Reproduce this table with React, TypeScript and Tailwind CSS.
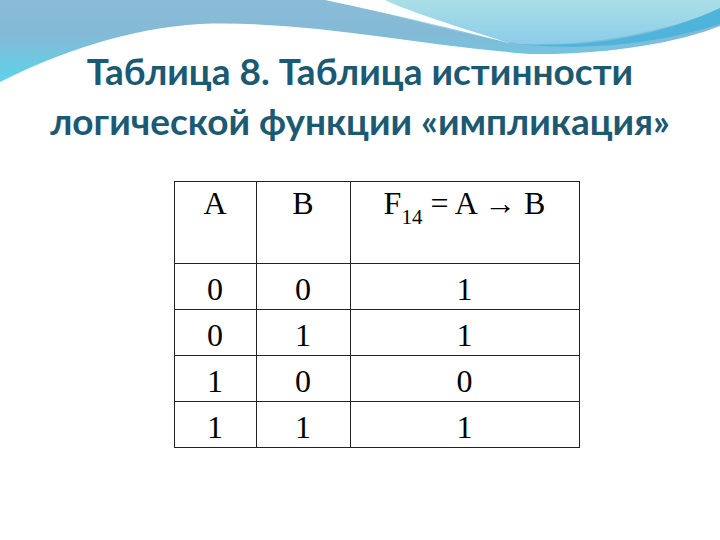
import React from "react";

const rows: [number, number, number][] = [
  [0, 0, 1],
  [0, 1, 1],
  [1, 0, 0],
  [1, 1, 1],
];

// decorative wave band across the top of the slide
const Wave = () => (
  <svg
    className="absolute left-0 top-0"
    width="720"
    height="110"
    viewBox="0 0 720 110"
    aria-hidden="true"
  >
    <defs>
      <linearGradient id="base" x1="0" y1="0" x2="0" y2="1">
        <stop offset="0" stopColor="#8abcd6" />
        <stop offset="0.3" stopColor="#84bad6" />
        <stop offset="0.75" stopColor="#5dd3ea" />
      </linearGradient>
      <linearGradient id="light" x1="0" y1="0" x2="0" y2="1">
        <stop offset="0" stopColor="#a9e0e6" />
        <stop offset="1" stopColor="#8ccbea" />
      </linearGradient>
    </defs>
    <rect x="0" y="0" width="720" height="110" fill="url(#base)" />
    <path d="M330,0 L720,0 L720,10 C650,36 585,46 520,44 C450,32 385,12 330,0 Z" fill="url(#light)" />
    <path d="M720,8 C655,38 585,48 518,44 C590,52 665,42 720,24 Z" fill="#4fb4da" />
    <path d="M325,0 C400,16 460,30 512,44 C455,26 405,10 385,0 Z" fill="#ffffff" />
    <path
      d="M0,82 C60,52 130,28 200,24 C310,20 420,46 530,54 C610,55 680,42 720,26 L720,110 L0,110 Z"
      fill="#ffffff"
    />
  </svg>
);

const cell = "border border-[#222] p-0 text-center";

export default function App() {
  return (
    <div className="relative w-[720px] h-[540px] overflow-hidden bg-white">
      <Wave />
      <div className="relative flex flex-col items-center">
        <h1
          className="mt-[46px] text-center text-[37px] leading-[50px] font-bold text-[#1b5a72]"
          style={{ fontFamily: "Lato, 'Open Sans', sans-serif" }}
        >
          Таблица 8. Таблица истинности
          <br />
          логической функции «импликация»
        </h1>

        <table
          className="mt-[35px] ml-[33px] border-collapse text-[32px] text-black"
          style={{ fontFamily: "'Liberation Serif', 'Times New Roman', serif" }}
        >
          <thead>
            <tr className="h-[82px]">
              <th className={`${cell} w-[82px] align-top pt-[7px] leading-[28px] font-normal`}>A</th>
              <th className={`${cell} w-[94px] align-top pt-[7px] leading-[28px] font-normal`}>B</th>
              <th className={`${cell} w-[229px] align-top pt-[7px] leading-[28px] font-normal`}>
                F<sub className="text-[21px] align-[-5px]">14</sub> = A → B
              </th>
            </tr>
          </thead>
          <tbody>
            {rows.map(([a, b, f], i) => (
              <tr key={i} className="h-[45px]">
                <td className={`${cell} pt-[5px] leading-[40px]`}>{a}</td>
                <td className={`${cell} pt-[5px] leading-[40px]`}>{b}</td>
                <td className={`${cell} pt-[5px] leading-[40px]`}>{f}</td>
              </tr>
            ))}
          </tbody>
        </table>
      </div>
    </div>
  );
}
